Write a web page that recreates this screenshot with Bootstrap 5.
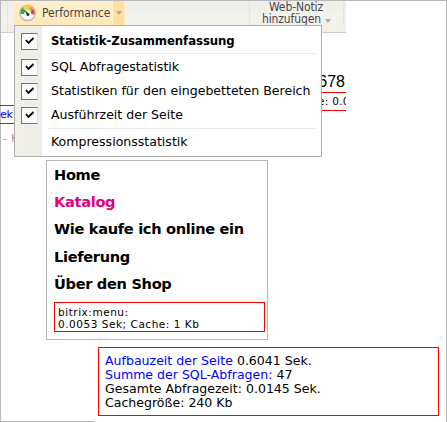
<!DOCTYPE html>
<html lang="de">
<head>
<meta charset="utf-8">
<title>Performance</title>
<link href="https://cdn.jsdelivr.net/npm/bootstrap@5.3.0/dist/css/bootstrap.min.css" rel="stylesheet">
<style>
body{background:#fff;color:#000;font-family:"DejaVu Sans",Verdana,sans-serif;font-size:12.55px}
.stage{width:447px;height:422px;border:1px solid #b9b9b9}
.top-zone{height:159px}
.ribbon{width:345px;height:32px;background:linear-gradient(#eeeee9,#f3f3ed 45%,#f0f0e8);border-bottom:1px solid #cfcfc5;font-family:"DejaVu Sans Condensed","DejaVu Sans",sans-serif;font-stretch:condensed;color:#474747}
.ribbon-gap{width:7px;flex:none;border-right:1px solid #e3e3dc;margin-right:6px;height:31px}
.perf{width:111px;height:24px;background:linear-gradient(#fff1d0,#ffe8b9);padding-left:5px;flex:none}
.perf-text{font-size:12px;line-height:25px;margin-left:6px;width:70px;white-space:nowrap}
.perf-drop{width:12px;height:24px;background:#ffdf9f;border-left:1px solid #fff2d5}
.note{width:95px;height:24px;border-left:1px solid #e5e5de;border-right:1px solid #e5e5de;font-size:12px;line-height:12px;margin-right:2px;white-space:nowrap;letter-spacing:-.1px}
.note-top{padding-right:1px}
.tri{display:inline-block;border:3px solid transparent;border-top:4px solid #aaa;border-bottom:0}
.tool-menu{left:13px;top:24px;width:308px;height:132px;border:1px solid #afafaf;background:linear-gradient(90deg,#f0f0e9 0,#ededE5 27px,#fff 27px);padding:3px 5px 0 6px}
.entry{height:24px;line-height:24px;white-space:nowrap}
.entry>span:last-child{margin-left:13px}
.entry-main{font-family:"DejaVu Sans Condensed","DejaVu Sans",sans-serif;font-stretch:condensed;font-size:13px;letter-spacing:-.05px}
.checks{padding-top:1px}
.tick{width:17px;height:17px;flex:none;background:#fbfbfb;border:1px solid #777;border-right-color:#ddd}
.tick-none{width:17px;flex:none}
.rule{height:1px;background:#e8e8e8;margin-left:28px}
.rule-low{margin-top:1px;margin-bottom:1px}
.clip-left{width:40px;height:19px;top:104px;left:-1px;border-top:1px solid #f00;border-bottom:1px solid #f00;color:#00f;font-size:11px;line-height:17px;letter-spacing:-.2px}
.crumb{top:130px;left:1px;color:#b98e88;font-size:11px}
.crumb i{color:#aaa;font-style:normal}
.price{right:101px;top:71px;font:16px/20px "Liberation Sans",Arial,sans-serif}
.clip-right{left:300px;top:91px;width:45px;height:19px;border-top:1px solid #f00;border-bottom:1px solid #f00;font-size:10.5px;line-height:17px;padding-left:17px;white-space:nowrap;letter-spacing:.3px}
.site-menu{width:222px;height:180px;margin-left:45px;border:1px solid #b9b9b9;background:#fff;padding:0 2px 0 7px}
.site-menu li{height:27.2px;line-height:27px;font-size:14.6px;letter-spacing:-.32px;font-weight:700;white-space:nowrap}
.pink{color:#e6007e}
.stat{height:30px;margin-top:5px;border:1px solid #f00;padding:3px 3px;font-size:10.5px;letter-spacing:.53px;line-height:12px;white-space:nowrap}
.summary-wrap{margin:4px 0 0 93px;width:352px;height:79px;padding:3px 0 0 4px;background:#fff}
.summary{width:341px;height:69px;border:1px solid #f00;padding:6px 6px;line-height:14px;white-space:nowrap}
.blue{color:#00f}
</style>
</head>
<body>
<main class="stage position-relative">
  <section class="top-zone">
    <div class="ribbon d-flex">
      <div class="ribbon-gap"></div>
      <div class="perf d-flex">
        <svg class="flex-shrink-0 align-self-center" width="17" height="18" viewBox="0 0 17 18"><circle cx="8.5" cy="9" r="8" fill="#c8c8c8" stroke="#aaa" stroke-width=".6"/><circle cx="8.5" cy="9" r="6.8" fill="#f8f8f8"/><path d="M1.6 10A7 7 0 0 1 4 3.6L6.4 7 4.7 10Z" fill="#36ad3d"/><path d="M4 3.6A7 7 0 0 1 10.5 2.3L9.5 5.6 6.3 6.8Z" fill="#f7d72c"/><path d="M10.5 2.3A7 7 0 0 1 14.2 5L11.7 7 9.5 5.6Z" fill="#f79a2b"/><path d="M14.2 5A7 7 0 0 1 15.4 10.5L12.3 10 11.7 7Z" fill="#eb3c31"/><path d="M5.2 5.5L10 9.8 8.3 11.6Z" fill="#333"/><circle cx="9" cy="10.7" r="1.4" fill="#333"/></svg>
        <span class="perf-text">Performance</span>
        <span class="perf-drop d-flex align-items-center justify-content-center"><i class="tri"></i></span>
      </div>
      <div class="note d-flex flex-column align-items-center ms-auto">
        <span class="note-top">Web-Notiz</span>
        <span class="d-flex align-items-center">hinzufügen<i class="tri ms-1 mt-1"></i></span>
      </div>
    </div>
    <div class="clip-left position-absolute">ek]</div>
    <div class="crumb position-absolute"><i>–</i> K</div>
    <div class="price position-absolute">678</div>
    <div class="clip-right position-absolute overflow-hidden">e: 0.0</div>
    <div class="tool-menu position-absolute">
      <div class="entry entry-main d-flex align-items-center fw-bold"><svg class="tick" viewBox="0 0 15 15"><path d="M4 6L6.5 9 11.5 4" fill="none" stroke="#000" stroke-width="1.8"/></svg><span>Statistik-Zusammenfassung</span></div>
      <div class="rule"></div>
      <div class="checks">
        <div class="entry d-flex align-items-center"><svg class="tick" viewBox="0 0 15 15"><path d="M4 6L6.5 9 11.5 4" fill="none" stroke="#000" stroke-width="1.8"/></svg><span>SQL Abfragestatistik</span></div>
        <div class="entry d-flex align-items-center"><svg class="tick" viewBox="0 0 15 15"><path d="M4 6L6.5 9 11.5 4" fill="none" stroke="#000" stroke-width="1.8"/></svg><span>Statistiken für den eingebetteten Bereich</span></div>
        <div class="entry d-flex align-items-center"><svg class="tick" viewBox="0 0 15 15"><path d="M4 6L6.5 9 11.5 4" fill="none" stroke="#000" stroke-width="1.8"/></svg><span>Ausführzeit der Seite</span></div>
      </div>
      <div class="rule rule-low"></div>
      <div class="entry d-flex align-items-center"><span class="tick-none"></span><span>Kompressionsstatistik</span></div>
    </div>
  </section>
  <nav class="site-menu">
    <ul class="list-unstyled mb-0">
      <li>Home</li><li class="pink">Katalog</li><li>Wie kaufe ich online ein</li><li>Lieferung</li><li>Über den Shop</li>
    </ul>
    <div class="stat">bitrix:menu:<br>0.0053 Sek; Cache: 1 Kb</div>
  </nav>
  <section class="summary-wrap">
    <div class="summary"><span class="blue">Aufbauzeit der Seite</span> 0.6041 Sek.<br><span class="blue">Summe der SQL-Abfragen:</span> 47<br>Gesamte Abfragezeit: 0.0145 Sek.<br>Cachegröße: 240 Kb</div>
  </section>
</main>
<script src="https://cdn.jsdelivr.net/npm/bootstrap@5.3.0/dist/js/bootstrap.bundle.min.js"></script>
</body>
</html>
